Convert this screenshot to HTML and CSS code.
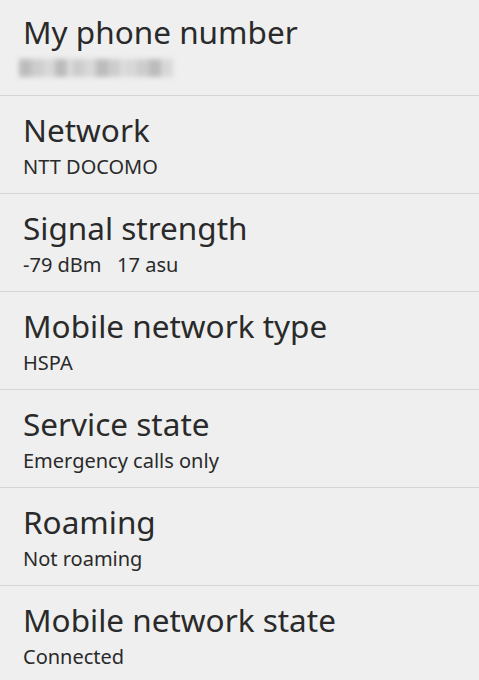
FILE: index.html
```html
<!DOCTYPE html>
<html lang="en">
<head>
  <meta charset="UTF-8" />
  <meta name="viewport" content="width=device-width, initial-scale=1" />
  <title>Status</title>
  <link rel="stylesheet" href="styles.css">
</head>
<body>

  <ul class="status-list">
    <li class="row">
      <div class="title">My phone number</div>
      <div class="blurred">
        <span class="px d2"></span><span class="px d1"></span><span class="px d3"></span><span class="px d2"></span>
        <span class="gap"></span>
        <span class="px d1"></span><span class="px d3"></span><span class="px d2"></span><span class="px d1"></span>
        <span class="gap"></span>
        <span class="px d3"></span><span class="px d1"></span><span class="px d2"></span><span class="px d3"></span>
      </div>
    </li>
    <li class="row">
      <div class="title">Network</div>
      <div class="summary">NTT DOCOMO</div>
    </li>
    <li class="row">
      <div class="title">Signal strength</div>
      <div class="summary">-79 dBm&nbsp;&nbsp;&nbsp;17 asu</div>
    </li>
    <li class="row">
      <div class="title">Mobile network type</div>
      <div class="summary">HSPA</div>
    </li>
    <li class="row">
      <div class="title">Service state</div>
      <div class="summary">Emergency calls only</div>
    </li>
    <li class="row">
      <div class="title">Roaming</div>
      <div class="summary">Not roaming</div>
    </li>
    <li class="row">
      <div class="title">Mobile network state</div>
      <div class="summary">Connected</div>
    </li>
  </ul>

</body>
</html>
```

FILE: styles.css
```css
* {
  margin: 0;
  padding: 0;
  box-sizing: border-box;
}
body {
  font-family: "Noto Sans", "Open Sans", sans-serif;
  background-color: #efefef;
  color: #2a2a2a;
  overflow: hidden;
}

/* list is scrolled a couple of pixels */
.status-list {
  list-style: none;
  margin-top: -2px;
}
.row {
  height: 98px;
  padding: 14px 0 0 23px;
  border-bottom: 1px solid #d5d5d5;
}
.title {
  font-size: 31.5px;
  line-height: 40px;
}
.summary {
  font-size: 20px;
  line-height: 28px;
  margin-top: 3px;
}

/* hidden phone number */
.blurred {
  display: flex;
  align-items: center;
  margin: 4px 0 0 -4px;
  height: 24px;
  width: 154px;
  filter: blur(2.5px);
}
.blurred .px {
  flex: 1;
  height: 18px;
}
.blurred .gap {
  width: 5px;
  height: 18px;
  background: #dedede;
}
.px.d1 { background: #cdcdcd; }
.px.d2 { background: #bcbcbc; }
.px.d3 { background: #d8d8d8; }
```
